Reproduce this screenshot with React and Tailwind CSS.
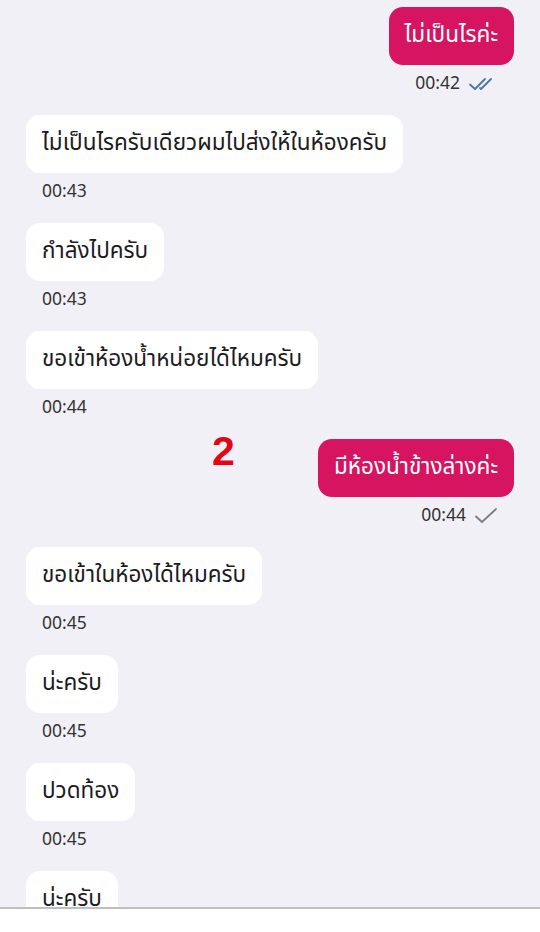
import React from 'react';

const messages = [
  { side: 'right', text: 'ไม่เป็นไรค่ะ', time: '00:42', status: 'read' },
  { side: 'left', text: 'ไม่เป็นไรครับเดียวผมไปส่งให้ในห้องครับ', time: '00:43' },
  { side: 'left', text: 'กำลังไปครับ', time: '00:43' },
  { side: 'left', text: 'ขอเข้าห้องน้ำหน่อยได้ไหมครับ', time: '00:44' },
  { side: 'right', text: 'มีห้องน้ำข้างล่างค่ะ', time: '00:44', status: 'sent', mark: '2' },
  { side: 'left', text: 'ขอเข้าในห้องได้ไหมครับ', time: '00:45' },
  { side: 'left', text: 'น่ะครับ', time: '00:45' },
  { side: 'left', text: 'ปวดท้อง', time: '00:45' },
  { side: 'left', text: 'น่ะครับ', time: '00:45' },
];

function DoubleCheck() {
  return (
    <svg width="30" height="16" viewBox="0 0 30 16" fill="none" stroke="#4a77a6" strokeWidth="1.8" strokeLinecap="round" strokeLinejoin="round">
      <path d="M2 8.5 L7 13 L17 3" />
      <path d="M12 12 L13 13 L23 3" />
    </svg>
  );
}

function SingleCheck() {
  return (
    <svg width="24" height="18" viewBox="0 0 24 18" fill="none" stroke="#7d7d82" strokeWidth="1.8" strokeLinecap="round" strokeLinejoin="round">
      <path d="M2 9.5 L8 15 L22 2" />
    </svg>
  );
}

function Message({ side, text, time, status, mark }) {
  const mine = side === 'right';
  return (
    <div className={`relative flex flex-col mb-[21px] ${mine ? 'items-end' : 'items-start'}`}>
      {mark && (
        <span className="absolute left-[186px] top-[-8px] text-[41px] font-bold leading-none text-[#e30613]" style={{ fontFamily: '"Liberation Sans", Arial, sans-serif' }}>
          {mark}
        </span>
      )}
      <div
        className={`h-[58px] px-4 flex items-center rounded-[14px] text-[22.5px] whitespace-nowrap ${
          mine ? 'bg-[#d6145f] text-white' : 'bg-white text-[#1c1c1e]'
        }`}
      >
        {text}
      </div>
      {mine ? (
        <div className="mt-[9px] h-[20px] flex items-center gap-[8px] pr-[16px] text-[17.5px] text-[#333]">
          <span>{time}</span>
          {status === 'read' ? <DoubleCheck /> : <SingleCheck />}
        </div>
      ) : (
        <div className="mt-[9px] h-[20px] flex items-center pl-[16px] text-[17.5px] text-[#333]">{time}</div>
      )}
    </div>
  );
}

export default function App() {
  return (
    <div
      className="w-[540px] h-[932px] bg-[#f1f0f6] flex flex-col"
      style={{ fontFamily: '"Noto Sans Thai", "Noto Sans", "Liberation Sans", sans-serif' }}
    >
      <div className="h-[907px] overflow-hidden px-[26px] pt-[7px]">
        {messages.map((m, i) => (
          <Message key={i} {...m} />
        ))}
      </div>
      <div className="flex-1 bg-white border-t-[2px] border-[#bdbdc2]" />
    </div>
  );
}
